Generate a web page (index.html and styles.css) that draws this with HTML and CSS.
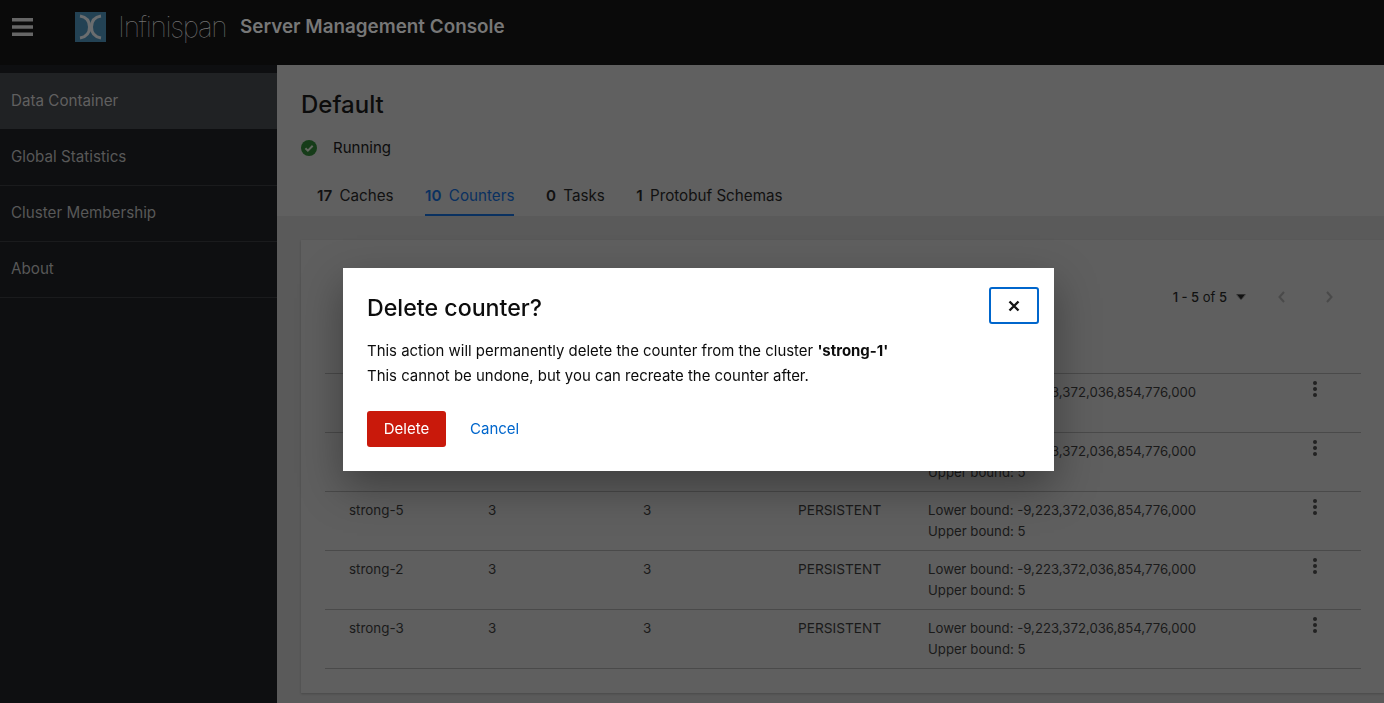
FILE: index.html
```html
<!DOCTYPE html>
<html lang="en">
<head>
    <meta charset="UTF-8">
    <title>Infinispan Server Management Console</title>
    <link rel="stylesheet" href="styles.css">
</head>
<body>
    <header class="masthead">
        <button class="nav-toggle" aria-label="Navigation">
            <svg width="21" height="18" viewBox="0 0 21 18"><path d="M0 0h21v3.4H0zM0 7.3h21v3.4H0zM0 14.6h21V18H0z"/></svg>
        </button>
        <svg class="logo-mark" width="31" height="30" viewBox="0 0 31 30">
            <rect width="31" height="30" fill="#234254"/>
            <path d="M5 4c6 1 9.500 5 9.500 11S11 25 5 26M26 4c-6 1-9.500 5-9.500 11S20 25 26 26" fill="none" stroke="#6a6d6f" stroke-width="3"/>
        </svg>
        <span class="logo-text">Infinispan</span>
        <span class="console-title">Server Management Console</span>
    </header>

    <div class="layout">
        <nav class="sidebar">
            <a class="nav-item active">Data Container</a>
            <a class="nav-item">Global Statistics</a>
            <a class="nav-item">Cluster Membership</a>
            <a class="nav-item">About</a>
        </nav>

        <main class="content">
            <section class="summary">
                <h1>Default</h1>
                <div class="status">
                    <svg width="16" height="16" viewBox="0 0 16 16">
                        <circle cx="8" cy="8" r="8" fill="#163c19"/>
                        <path d="M4.400 8.200l2.500 2.500 4.800-4.900" fill="none" stroke="#62665f" stroke-width="2"/>
                    </svg>
                    <span>Running</span>
                </div>
                <div class="tabs">
                    <a class="tab"><b>17</b> Caches</a>
                    <a class="tab current"><b>10</b> Counters</a>
                    <a class="tab"><b>0</b> Tasks</a>
                    <a class="tab"><b>1</b> Protobuf Schemas</a>
                </div>
            </section>

            <section class="panel">
                <div class="card">
                    <div class="toolbar">
                        <span class="page-range"><b>1 - 5</b> of <b>5</b></span>
                        <svg class="caret" width="10" height="6" viewBox="0 0 10 6"><path d="M0 0h10L5 6z"/></svg>
                        <svg class="arrow" width="7" height="12" viewBox="0 0 7 12"><path d="M6 1L1.500 6 6 11" fill="none" stroke-width="2"/></svg>
                        <svg class="arrow" width="7" height="12" viewBox="0 0 7 12"><path d="M1 1l4.500 5L1 11" fill="none" stroke-width="2"/></svg>
                    </div>
                    <table class="counters">
                        <colgroup>
                            <col class="col-name">
                            <col class="col-num">
                            <col class="col-num">
                            <col class="col-store">
                            <col class="col-bounds">
                            <col>
                        </colgroup>
                        <tbody>
                            <tr><td>strong-1</td><td>3</td><td>3</td><td>PERSISTENT</td><td>Lower bound: -9,223,372,036,854,776,000<br>Upper bound: 5</td><td><span class="kebab"><i></i><i></i><i></i></span></td></tr>
                            <tr><td>strong-4</td><td>3</td><td>3</td><td>PERSISTENT</td><td>Lower bound: -9,223,372,036,854,776,000<br>Upper bound: 5</td><td><span class="kebab"><i></i><i></i><i></i></span></td></tr>
                            <tr><td>strong-5</td><td>3</td><td>3</td><td>PERSISTENT</td><td>Lower bound: -9,223,372,036,854,776,000<br>Upper bound: 5</td><td><span class="kebab"><i></i><i></i><i></i></span></td></tr>
                            <tr><td>strong-2</td><td>3</td><td>3</td><td>PERSISTENT</td><td>Lower bound: -9,223,372,036,854,776,000<br>Upper bound: 5</td><td><span class="kebab"><i></i><i></i><i></i></span></td></tr>
                            <tr><td>strong-3</td><td>3</td><td>3</td><td>PERSISTENT</td><td>Lower bound: -9,223,372,036,854,776,000<br>Upper bound: 5</td><td><span class="kebab"><i></i><i></i><i></i></span></td></tr>
                        </tbody>
                    </table>
                </div>
            </section>
        </main>
    </div>

    <div class="modal" role="dialog">
        <button class="modal-close" aria-label="Close">
            <svg width="12" height="12" viewBox="0 0 12 12"><path d="M1.500 1.500l9 9M10.500 1.500l-9 9" fill="none" stroke="#151515" stroke-width="2.400"/></svg>
        </button>
        <h2>Delete counter?</h2>
        <p>This action will permanently delete the counter from the cluster <b>'strong-1'</b><br>This cannot be undone, but you can recreate the counter after.</p>
        <div class="modal-actions">
            <button class="btn-danger">Delete</button>
            <a class="btn-link">Cancel</a>
        </div>
    </div>
</body>
</html>
```

FILE: styles.css
```css
* {
    box-sizing: border-box;
}
html, body {
    height: 703px;
    overflow: hidden;
}
body {
    margin: 0;
    font-family: 'Inter', 'Noto Sans', sans-serif;
    font-size: 14px;
    color: #0c0c0c;
    background: #5a5a5a;
}
button {
    font-family: inherit;
    border: none;
    background: none;
    padding: 0;
}

/* header */
.masthead {
    height: 65px;
    background: #0a0a0a;
    display: flex;
    align-items: center;
    padding: 0 0 12px 12px;
    color: #777;
}
.nav-toggle {
    display: flex;
    margin-top: 1px;
    fill: #666;
}
.logo-mark {
    margin-left: 42px;
    margin-top: 1px;
}
.logo-text {
    width: 108px;
    margin-left: 12px;
    font-size: 28px;
    font-weight: 100;
    letter-spacing: -1.300px;
    white-space: nowrap;
    color: #6f6f6f;
}
.console-title {
    margin-left: 14px;
    font-size: 18.850px;
    font-weight: 600;
}

/* sidebar */
.layout {
    display: flex;
    height: 638px;
}
.sidebar {
    width: 277px;
    flex: none;
    background: #0e0f11;
    padding-top: 8px;
}
.nav-item {
    display: block;
    height: 56px;
    line-height: 54px;
    padding-left: 11px;
    font-size: 15.200px;
    color: #585858;
    border-bottom: 1px solid #1a1b1d;
}
.nav-item.active {
    background: #202224;
    color: #606060;
    line-height: 55px;
    margin-bottom: 1px;
    border-bottom: none;
}

/* main */
.content {
    flex: 1;
    min-width: 0;
    display: flex;
    flex-direction: column;
}
.summary {
    height: 151px;
    background: #606060;
    padding: 24px 0 0 24px;
}
h1 {
    margin: 0;
    font-size: 24px;
    font-weight: 500;
    line-height: 32px;
}
.status {
    display: flex;
    align-items: center;
    gap: 16px;
    margin-top: 15px;
    font-size: 15px;
    line-height: 24px;
}
.tabs {
    display: flex;
    margin-top: 26px;
    padding-left: 16px;
    gap: 31.500px;
    font-size: 15.200px;
    color: #111;
}
.tab {
    height: 31px;
}
.tab b {
    font-weight: 600;
    margin-right: 3px;
}
.tab.current {
    color: #0a3160;
    border-bottom: 3px solid #0a3160;
}
.panel {
    flex: 1;
    padding: 24px 0 10px 24px;
    background: #5a5a5a;
}
.card {
    height: 100%;
    background: #5f5f5f;
    padding-left: 24px;
    box-shadow: 0 1px 2px rgba(0,0,0,0.2);
}
.toolbar {
    height: 133px;
    display: flex;
    justify-content: flex-end;
    padding: 48px 51px 0 0;
    font-size: 13px;
    color: #111;
    stroke: #4a4a4a;
}
.page-range {
    line-height: 18px;
}
.page-range b {
    font-weight: 500;
}
.caret {
    margin: 6px 0 0 9px;
    fill: #111;
}
.arrow {
    margin: 3px 0 0 32px;
}
.arrow:last-child {
    margin-left: 41px;
}
.counters {
    width: 1036px;
    border-collapse: collapse;
    table-layout: fixed;
    font-size: 13.400px;
    color: #1a1a1a;
}
.col-name { width: 139px; }
.col-num { width: 155px; }
.col-store { width: 130px; }
.col-bounds { width: 387px; }
td {
    height: 59px;
    padding: 8px 0 8px 24px;
    line-height: 21px;
    vertical-align: top;
    border-top: 1px solid #4a4a4a;
}
td:nth-child(4) {
    font-size: 13.700px;
}
td:nth-child(5) {
    font-size: 13.200px;
}
td:last-child {
    padding-left: 22px;
}
tbody tr:last-child td {
    border-bottom: 1px solid #4a4a4a;
}
.kebab {
    display: flex;
    flex-direction: column;
    gap: 2px;
    width: 4px;
    margin-top: -1px;
}
.kebab i {
    width: 4px;
    height: 4px;
    border-radius: 50%;
    background: #222;
}

/* delete dialog */
.modal {
    position: fixed;
    left: 343px;
    top: 268px;
    width: 711px;
    height: 203px;
    background: #fff;
    padding: 25px 24px 24px;
    box-shadow: 0 16px 40px rgba(0,0,0,0.35);
}
.modal h2 {
    margin: 0;
    font-size: 23.200px;
    font-weight: 500;
    line-height: 31px;
}
.modal p {
    margin: 15px 0 0;
    font-size: 14.950px;
    line-height: 25px;
}
.modal-close {
    position: absolute;
    top: 19px;
    right: 15px;
    width: 50px;
    height: 37px;
    display: flex;
    align-items: center;
    justify-content: center;
    border: 2px solid #06c;
    border-radius: 3px;
}
.modal-actions {
    display: flex;
    align-items: center;
    gap: 24px;
    margin-top: 22px;
}
.btn-danger {
    width: 79px;
    height: 36px;
    padding-bottom: 2px;
    border-radius: 3px;
    background: #c9190b;
    color: #fff;
    font-size: 15px;
}
.btn-link {
    color: #06c;
    font-size: 15px;
    margin-top: -2px;
}
```
